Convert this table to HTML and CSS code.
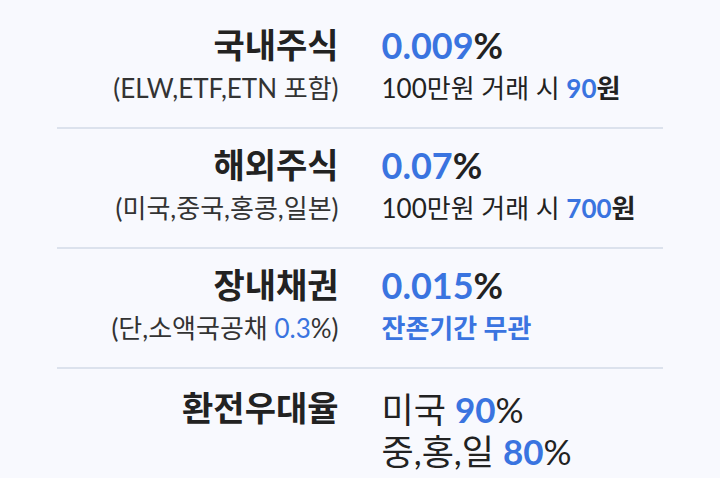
FILE: index.html
```html
<!DOCTYPE html>
<html lang="ko">
<head>
<meta charset="utf-8">
<link rel="stylesheet" href="styles.css">
</head>
<body>
<div class="table">
  <div class="row">
    <div class="label">
      <div class="title">국내주식</div>
      <div class="sub">(ELW,ETF,ETN 포함)</div>
    </div>
    <div class="value">
      <div class="rate"><span class="blue">0.009</span>%</div>
      <div class="desc">100만원 거래 시 <b class="blue">90</b><b>원</b></div>
    </div>
  </div>
  <div class="row">
    <div class="label">
      <div class="title">해외주식</div>
      <div class="sub">(미국,중국,홍콩,일본)</div>
    </div>
    <div class="value">
      <div class="rate"><span class="blue">0.07</span>%</div>
      <div class="desc">100만원 거래 시 <b class="blue">700</b><b>원</b></div>
    </div>
  </div>
  <div class="row">
    <div class="label">
      <div class="title">장내채권</div>
      <div class="sub">(단,소액국공채 <span class="blue">0.3</span>%)</div>
    </div>
    <div class="value">
      <div class="rate"><span class="blue">0.015</span>%</div>
      <div class="desc blue strong">잔존기간 무관</div>
    </div>
  </div>
  <div class="row">
    <div class="label">
      <div class="title">환전우대율</div>
    </div>
    <div class="value">
      <div class="fx">미국 <b class="blue">90</b><span class="pct">%</span></div>
      <div class="fx">중,홍,일 <b class="blue">80</b><span class="pct">%</span></div>
    </div>
  </div>
</div>
</body>
</html>
```
FILE: styles.css
```css
html, body {
  margin: 0;
  padding: 0;
  background: #f8f9fe;
}
body {
  font-family: Lato, "Noto Sans CJK KR", sans-serif;
  color: #222222;
  padding-top: 9px;
}
.table {
  margin: 0 57px;
}
.row {
  display: grid;
  grid-template-columns: 1fr 1fr;
  column-gap: 43px;
  height: 120px;
  padding-top: 14px;
  box-sizing: border-box;
  border-bottom: 2px solid #dce2ed;
}
.row:last-child {
  border-bottom: none;
  padding-top: 17px;
}
.label {
  text-align: right;
}
.title {
  font-size: 34px;
  font-weight: 700;
  line-height: 44px;
  margin-bottom: 3px;
}
.sub {
  font-size: 26px;
  line-height: 36px;
  color: #333;
}
.rate {
  font-size: 36px;
  font-weight: 700;
  line-height: 44px;
  margin-bottom: 3px;
}
.desc {
  font-size: 26px;
  line-height: 36px;
  color: #222;
}
.desc b, .strong {
  font-weight: 700;
}
.blue {
  color: #3a74e0;
}
.fx {
  font-size: 35px;
  line-height: 42px;
}
.fx:first-child {
  margin-top: 2px;
}
.fx b {
  font-weight: 700;
}
```
